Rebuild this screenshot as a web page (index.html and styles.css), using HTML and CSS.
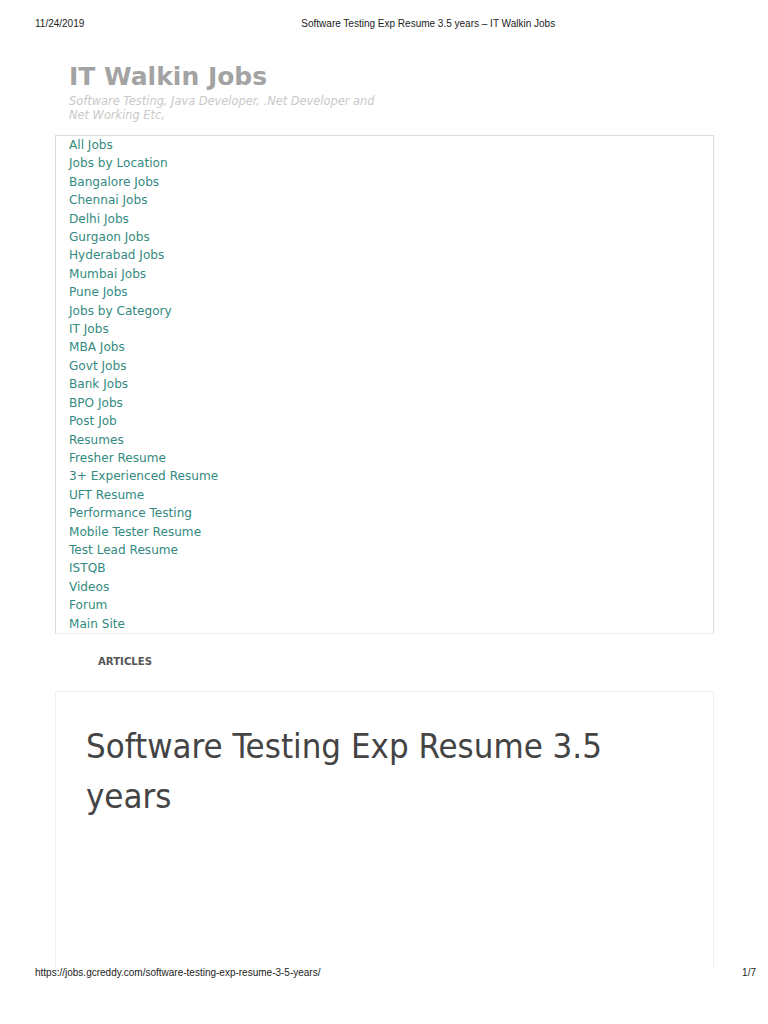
FILE: index.html
```html
<!DOCTYPE html>
<html lang="en">
<head>
    <meta charset="UTF-8">
    <title>Software Testing Exp Resume 3.5 years – IT Walkin Jobs</title>
    <link rel="stylesheet" href="styles.css">
</head>
<body>

<div class="print_head">
    <span class="print_date">11/24/2019</span>
    <span class="print_title">Software Testing Exp Resume 3.5 years – IT Walkin Jobs</span>
</div>

<div class="page">
    <div class="site_head">
        <div class="site_name">IT Walkin Jobs</div>
        <div class="site_desc">Software Testing, Java Developer, .Net Developer and<br/>Net Working Etc,</div>
    </div>

    <!--菜单-->
    <ul class="menu">
        <li><a href="#">All Jobs</a></li>
        <li><a href="#">Jobs by Location</a></li>
        <li><a href="#">Bangalore Jobs</a></li>
        <li><a href="#">Chennai Jobs</a></li>
        <li><a href="#">Delhi Jobs</a></li>
        <li><a href="#">Gurgaon Jobs</a></li>
        <li><a href="#">Hyderabad Jobs</a></li>
        <li><a href="#">Mumbai Jobs</a></li>
        <li><a href="#">Pune Jobs</a></li>
        <li><a href="#">Jobs by Category</a></li>
        <li><a href="#">IT Jobs</a></li>
        <li><a href="#">MBA Jobs</a></li>
        <li><a href="#">Govt Jobs</a></li>
        <li><a href="#">Bank Jobs</a></li>
        <li><a href="#">BPO Jobs</a></li>
        <li><a href="#">Post Job</a></li>
        <li><a href="#">Resumes</a></li>
        <li><a href="#">Fresher Resume</a></li>
        <li><a href="#">3+ Experienced Resume</a></li>
        <li><a href="#">UFT Resume</a></li>
        <li><a href="#">Performance Testing</a></li>
        <li><a href="#">Mobile Tester Resume</a></li>
        <li><a href="#">Test Lead Resume</a></li>
        <li><a href="#">ISTQB</a></li>
        <li><a href="#">Videos</a></li>
        <li><a href="#">Forum</a></li>
        <li><a href="#">Main Site</a></li>
    </ul>

    <div class="section_label">ARTICLES</div>

    <div class="post">
        <h1 class="post_title">Software Testing Exp Resume 3.5 years</h1>
    </div>
</div>

<div class="print_foot">
    <span>https://jobs.gcreddy.com/software-testing-exp-resume-3-5-years/</span>
    <span>1/7</span>
</div>

</body>
</html>
```

FILE: styles.css
```css
html, body {
    margin: 0;
    padding: 0;
    background-color: #fff;
}

body {
    width: 768px;
    height: 1024px;
    display: flex;
    flex-direction: column;
    overflow: hidden;
    font-family: "DejaVu Sans", Verdana, sans-serif;
}

.print_head {
    display: flex;
    padding: 18px 0 0 35px;
    height: 16px;
    font-family: "Liberation Sans", Arial, sans-serif;
    font-size: 10px;
    color: #222;
}

.print_title {
    margin-left: 217px;
}

.page {
    flex: 1;
    overflow: hidden;
    padding: 0 54px 0 55px;
}

.site_head {
    padding: 28px 0 0 14px;
    height: 73px;
}

.site_name {
    font-size: 25px;
    font-weight: bold;
    color: #a3a3a3;
    line-height: 30px;
}

.site_desc {
    font-size: 11.4px;
    font-style: italic;
    color: #c9c9c9;
    line-height: 14px;
    margin-top: 2px;
}

.menu {
    list-style: none;
    margin: 0;
    padding: 0 0 0 13px;
    border: 1px solid #dcdcdc;
    border-bottom-color: #eee;
}

.menu li {
    line-height: 18.4px;
    font-size: 12.1px;
}

.menu a {
    color: #338a80;
    text-decoration: none;
}

.section_label {
    padding: 21px 0 0 43px;
    height: 36px;
    font-family: "DejaVu Sans Condensed", "DejaVu Sans", sans-serif;
    font-weight: bold;
    font-size: 11.3px;
    color: #555;
}

.post {
    border: 1px solid #efefef;
    padding: 29px 30px 200px 30px;
}

.post_title {
    margin: 0;
    width: 560px;
    font-family: "DejaVu Sans Condensed", "DejaVu Sans", sans-serif;
    font-weight: normal;
    font-size: 34.5px;
    line-height: 50px;
    color: #444;
}

.print_foot {
    display: flex;
    justify-content: space-between;
    padding: 0 12px 46px 35px;
    font-family: "Liberation Sans", Arial, sans-serif;
    font-size: 10px;
    color: #222;
}
```
